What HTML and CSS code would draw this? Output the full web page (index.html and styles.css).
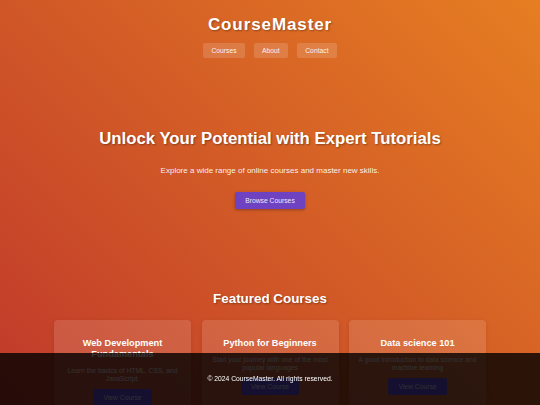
FILE: index.html
```html
<!DOCTYPE html>
<html lang="en">
<head>
<meta charset="utf-8">
<title>CourseMaster</title>
<link rel="stylesheet" href="styles.css">
</head>
<body>
<header class="site-header">
  <h1 class="logo">CourseMaster</h1>
  <nav class="nav">
    <a class="nav-link" href="#">Courses</a>
    <a class="nav-link" href="#">About</a>
    <a class="nav-link" href="#">Contact</a>
  </nav>
</header>
<section class="hero">
  <h2 class="hero-title">Unlock Your Potential with Expert Tutorials</h2>
  <p class="hero-sub">Explore a wide range of online courses and master new skills.</p>
  <a class="btn btn-primary" href="#">Browse Courses</a>
</section>
<section class="featured">
  <h2 class="featured-title">Featured Courses</h2>
  <div class="cards">
    <div class="card">
      <h3 class="card-title">Web Development Fundamentals</h3>
      <p class="card-desc">Learn the basics of HTML, CSS, and JavaScript.</p>
      <a class="btn btn-card" href="#">View Course</a>
    </div>
    <div class="card">
      <h3 class="card-title">Python for Beginners</h3>
      <p class="card-desc">Start your journey with one of the most popular languages</p>
      <a class="btn btn-card" href="#">View Course</a>
    </div>
    <div class="card">
      <h3 class="card-title">Data science 101</h3>
      <p class="card-desc">A good introduction to data science and machine learning</p>
      <a class="btn btn-card" href="#">View Course</a>
    </div>
  </div>
</section>
<footer class="site-footer">
  <p class="footer-text">&copy; 2024 CourseMaster. All rights reserved.</p>
</footer>
</body>
</html>
```
FILE: styles.css
```css
* { box-sizing: border-box; }
html, body { margin: 0; padding: 0; }
body {
  font-family: "Liberation Sans", Arial, sans-serif;
  font-size: 6.75px;
  color: #fff;
  background: linear-gradient(45deg, #c0392b, #e67e22) fixed;
  min-height: 100vh;
  padding-bottom: 60px;
}
a { text-decoration: none; color: inherit; }

.site-header {
  padding-top: 15px;
  text-align: center;
}
.logo {
  margin: 0;
  font-size: 17px;
  line-height: 20px;
  font-weight: bold;
  letter-spacing: 0.9px;
  text-shadow: 1px 1px 2px rgba(0,0,0,0.35);
}
.nav {
  margin-top: 8px;
  display: flex;
  justify-content: center;
  gap: 8.5px;
}
.nav-link {
  display: block;
  padding: 3.5px 8.5px;
  line-height: 8px;
  background: rgba(255,255,255,0.15);
  border-radius: 2px;
  color: rgba(255,255,255,0.92);
}

.hero {
  text-align: center;
  padding: 71px 0 82px;
}
.hero-title {
  margin: 0;
  font-size: 16.75px;
  line-height: 20px;
  font-weight: bold;
  text-shadow: 1px 1px 2px rgba(0,0,0,0.35);
}
.hero-sub {
  margin: 16.5px 0 16.5px;
  font-size: 8px;
  line-height: 10px;
  color: rgba(255,255,255,0.92);
}
.btn {
  display: inline-block;
  padding: 4px 10px;
  line-height: 9px;
  border-radius: 2px;
}
.btn-primary {
  background: #6f42c1;
  color: rgba(255,255,255,0.9);
  box-shadow: 0 1px 3px rgba(0,0,0,0.3);
}

.featured {
  max-width: 432px;
  margin: 0 auto;
  text-align: center;
}
.featured-title {
  margin: 0 0 13px;
  font-size: 13.4px;
  line-height: 16px;
  font-weight: bold;
  text-shadow: 1px 1px 2px rgba(0,0,0,0.35);
}
.cards {
  display: grid;
  grid-template-columns: repeat(3, 1fr);
  gap: 10.5px;
}
.card {
  background: rgba(255,255,255,0.12);
  border-radius: 4px;
  padding: 18px 8.5px 14px;
  box-shadow: 0 1px 4px rgba(0,0,0,0.1);
}
.card-title {
  margin: 0 0 6.5px;
  font-size: 9.2px;
  line-height: 11px;
  font-weight: bold;
}
.card-desc {
  margin: 0 0 6px;
  line-height: 8px;
  color: rgba(255,255,255,0.9);
}
.btn-card {
  background: #6a4cf0;
  color: rgba(255,255,255,0.85);
}

.site-footer {
  position: fixed;
  left: 0;
  right: 0;
  bottom: 0;
  height: 52px;
  display: flex;
  align-items: center;
  justify-content: center;
  background: rgba(0,0,0,0.8);
}
.footer-text {
  margin: 0;
  line-height: 8px;
  color: #fff;
}
```
